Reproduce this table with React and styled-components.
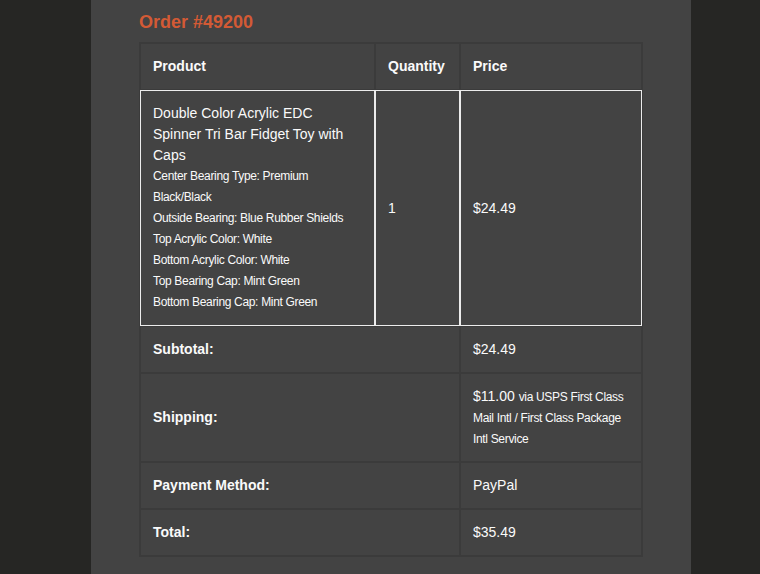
import React from "react";
import styled, { createGlobalStyle } from "styled-components";

const Global = createGlobalStyle`
  html, body { margin: 0; padding: 0; background: #262624; }
  body { font-family: "Liberation Sans", Arial, Helvetica, sans-serif; }
`;

const Page = styled.div`
  display: flex;
  justify-content: flex-start;
  padding-left: 91px;
  min-height: 574px;
  background: #262624;
`;

const Container = styled.div`
  width: 600px;
  box-sizing: border-box;
  background: #434343;
  padding: 11px 48px 18px;
  min-height: 574px;
`;

const Heading = styled.h2`
  margin: 0 0 8px;
  color: #d35a35;
  font-size: 18px;
  font-weight: bold;
  line-height: 23px;
`;

const Table = styled.table`
  width: 504px;
  border-collapse: separate;
  border-spacing: 0;
  border: 1px solid #3b3b3b;
  color: #fafafa;
  font-size: 14px;
  line-height: 21px;
  table-layout: fixed;
`;

const Cell = styled.td`
  box-sizing: border-box;
  padding: 12px;
  text-align: left;
  vertical-align: middle;
  border: 1px solid ${(p) => (p.$light ? "#ececec" : "#3b3b3b")};
  font-weight: ${(p) => (p.$bold ? "bold" : "normal")};
  color: #fafafa;
`;

const Meta = styled.div`
  font-size: 12px;
  line-height: 21px;
  letter-spacing: -0.33px;
`;

const Small = styled.small`
  font-size: 12px;
  line-height: 1;
  letter-spacing: -0.33px;
`;

const metas = [
  "Center Bearing Type: Premium Black/Black",
  "Outside Bearing: Blue Rubber Shields",
  "Top Acrylic Color: White",
  "Bottom Acrylic Color: White",
  "Top Bearing Cap: Mint Green",
  "Bottom Bearing Cap: Mint Green",
];

const totals = [
  { label: "Subtotal:", value: "$24.49" },
  {
    label: "Shipping:",
    value: (
      <>
        $11.00 <Small>via USPS First Class Mail Intl / First Class Package Intl Service</Small>
      </>
    ),
  },
  { label: "Payment Method:", value: "PayPal" },
  { label: "Total:", value: "$35.49" },
];

export default function App() {
  return (
    <>
      <Global />
      <Page>
        <Container>
          <Heading>Order #49200</Heading>
          <Table>
            <colgroup>
              <col style={{ width: 235 }} />
              <col style={{ width: 85 }} />
              <col style={{ width: 182 }} />
            </colgroup>
            <thead>
              <tr>
                <Cell as="th" $bold>Product</Cell>
                <Cell as="th" $bold>Quantity</Cell>
                <Cell as="th" $bold>Price</Cell>
              </tr>
            </thead>
            <tbody>
              <tr>
                <Cell $light>
                  Double Color Acrylic EDC Spinner Tri Bar Fidget Toy with Caps
                  {metas.map((m) => (
                    <Meta key={m}>{m}</Meta>
                  ))}
                </Cell>
                <Cell $light>1</Cell>
                <Cell $light>$24.49</Cell>
              </tr>
            </tbody>
            <tfoot>
              {totals.map((t) => (
                <tr key={t.label}>
                  <Cell as="th" colSpan={2} $bold>{t.label}</Cell>
                  <Cell>{t.value}</Cell>
                </tr>
              ))}
            </tfoot>
          </Table>
        </Container>
      </Page>
    </>
  );
}
